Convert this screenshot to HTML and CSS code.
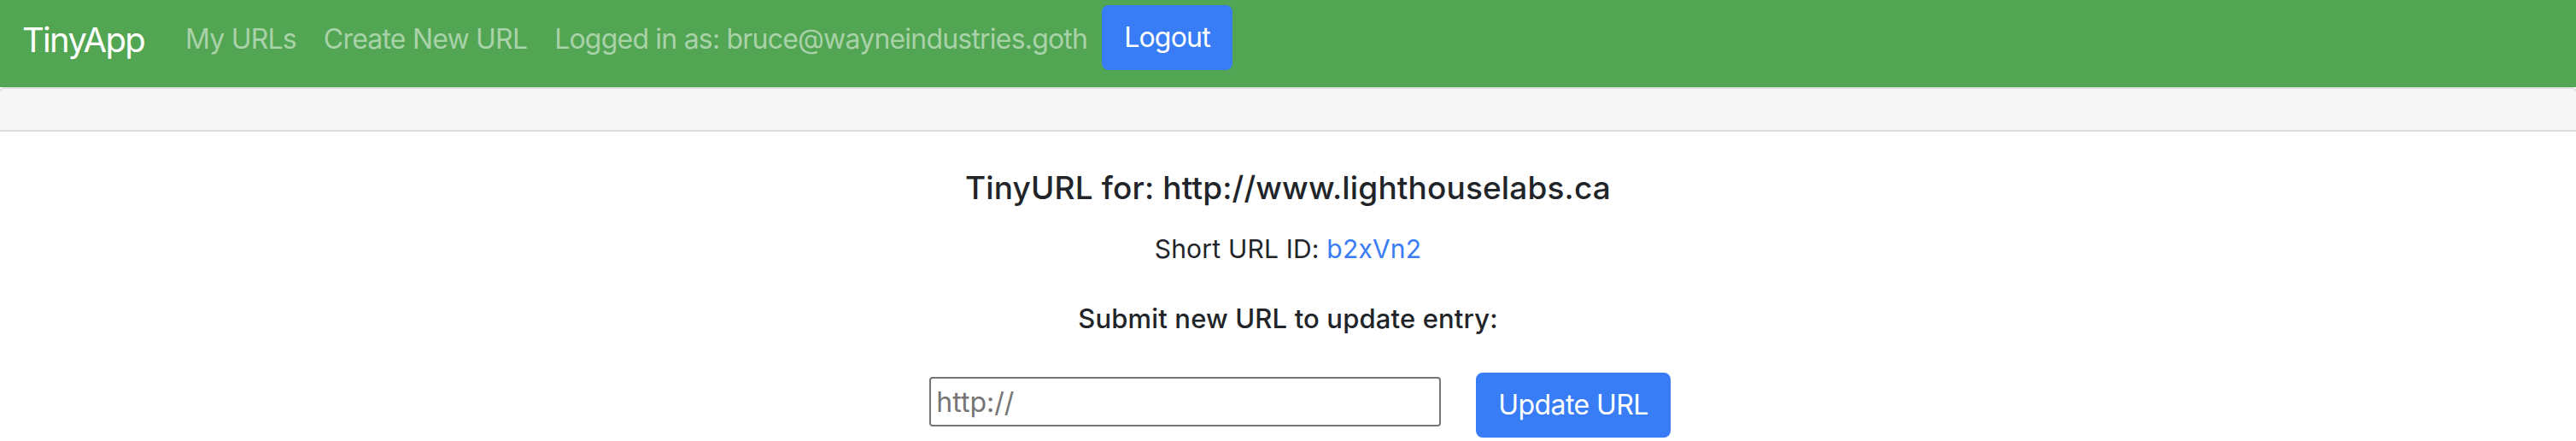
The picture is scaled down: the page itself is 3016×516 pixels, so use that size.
FILE: index.html
```html
<!DOCTYPE html>
<html lang="en">
<head>
<meta charset="utf-8">
<title>TinyApp</title>
<link rel="stylesheet" href="styles.css">
</head>
<body>
<nav class="navbar">
  <a class="brand" href="#">TinyApp</a>
  <ul class="nav">
    <li><a class="nav-link" href="#">My URLs</a></li>
    <li><a class="nav-link" href="#">Create New URL</a></li>
    <li><span class="nav-link">Logged in as: bruce@wayneindustries.goth</span></li>
  </ul>
  <button class="btn btn-primary btn-logout" type="button">Logout</button>
</nav>
<main class="card">
  <div class="card-header"></div>
  <div class="card-body">
    <h5 class="card-title">TinyURL for: http://www.lighthouselabs.ca</h5>
    <p class="card-text">Short URL ID: <a href="#">b2xVn2</a></p>
    <h6 class="update-title">Submit new URL to update entry:</h6>
    <form class="update-form">
      <input class="url-input" type="text" placeholder="http://">
      <button class="btn btn-primary btn-update" type="button">Update URL</button>
    </form>
  </div>
</main>
</body>
</html>
```
FILE: styles.css
```css
* { box-sizing: border-box; }
html, body { margin: 0; padding: 0; }
body {
  font-family: Inter, "Noto Sans", sans-serif;
  color: #212529;
  background: #fff;
  height: 516px;
  overflow: hidden;
}
a { text-decoration: none; }

.navbar {
  display: flex;
  align-items: flex-start;
  height: 102px;
  padding: 6px 0 0 26px;
  background: #52a552;
}
.brand {
  margin-top: 17px;
  margin-right: 32px;
  font-size: 40px;
  line-height: 48px;
  letter-spacing: -1.7px;
  color: #fff;
}
.nav {
  display: flex;
  list-style: none;
  margin: 16px 0 0 0;
  padding: 0;
}
.nav-link {
  display: block;
  padding: 0 16px;
  font-size: 32px;
  line-height: 48px;
  letter-spacing: -0.8px;
  color: #a9d2a9;
}
.btn {
  font-family: inherit;
  font-size: 32px;
  line-height: 48px;
  padding: 12px 24px;
  border: 2px solid transparent;
  border-radius: 8px;
  cursor: pointer;
}
.btn-primary {
  background: #387cf6;
  border-color: #387cf6;
  color: #fff;
}
.btn-logout {
  margin-left: 1px;
  letter-spacing: -0.8px;
}
.btn-update { letter-spacing: -0.6px; }

.card {
  margin: 0 -2px;
  border: 2px solid #dedede;
  border-bottom: none;
  border-radius: 8px 8px 0 0;
}
.card-header {
  height: 50px;
  background: #f6f6f6;
  border-bottom: 2px solid #dedede;
  border-radius: 6px 6px 0 0;
}
.card-body {
  padding: 42px 0 0;
  text-align: center;
}
.card-title {
  margin: 0 0 23px;
  font-size: 37px;
  font-weight: 500;
  line-height: 48px;
  letter-spacing: 0.15px;
}
.card-text {
  margin: 0 0 34px;
  font-size: 30px;
  line-height: 48px;
  letter-spacing: 0.2px;
}
.card-text a { color: #387cf6; }
.update-title {
  margin: 0 0 39px;
  font-size: 31px;
  font-weight: 500;
  line-height: 48px;
  letter-spacing: 0.15px;
}
.update-form {
  display: flex;
  justify-content: center;
  align-items: flex-start;
  gap: 41px;
  padding-left: 28px;
}
.url-input {
  width: 599px;
  height: 58px;
  margin-top: 5px;
  padding: 0 6px;
  border: 2px solid #767676;
  border-radius: 4px;
  font-family: inherit;
  font-size: 32px;
  color: #212529;
}
.url-input::placeholder { color: #757575; }
```
